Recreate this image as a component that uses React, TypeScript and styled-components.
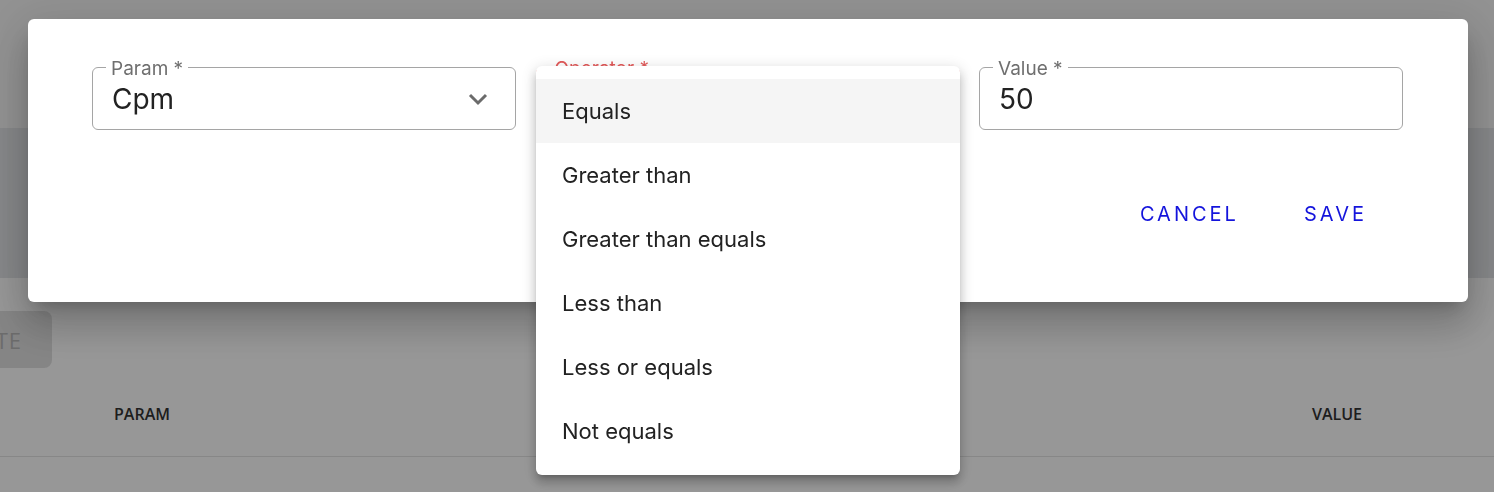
import styled, { createGlobalStyle } from "styled-components";

const GlobalStyle = createGlobalStyle`
  html, body {
    margin: 0;
    padding: 0;
    overflow: hidden;
    background: #fcfcfc;
    font-family: Inter, "Open Sans", sans-serif;
  }
`;

const Page = styled.div`
  width: 1494px;
  height: 492px;
  display: flex;
  flex-direction: column;
  background: #fcfcfc;
`;

const TopBand = styled.div`
  height: 128px;
  background: #f4f4f4;
`;

const FilterBand = styled.div`
  height: 150px;
  background: #e0e2e5;
`;

const ButtonRow = styled.div`
  width: 52px;
  margin-top: 33px;
  display: flex;
  justify-content: flex-end;
`;

const CreateButton = styled.button`
  flex-shrink: 0;
  height: 57px;
  padding: 0 30px;
  border: none;
  border-radius: 8px;
  background: #dedede;
  color: #b4b4b4;
  font-family: "Open Sans", sans-serif;
  font-size: 22px;
  letter-spacing: 1px;
`;

const TableHead = styled.div`
  margin-top: 8px;
  height: 81px;
  display: grid;
  grid-template-columns: 1fr 1fr auto;
  align-items: center;
  padding: 0 132px 4px 114px;
  box-sizing: border-box;
  border-bottom: 1px solid #e2e2e2;
`;

const HeadCell = styled.div`
  font-family: "Open Sans", sans-serif;
  font-weight: 600;
  font-size: 16px;
  color: #333;
`;

const Backdrop = styled.div`
  position: fixed;
  inset: 0;
  background: rgba(0, 0, 0, 0.4);
  padding: 19px 0 0 28px;
`;

const Dialog = styled.div`
  width: 1440px;
  box-sizing: border-box;
  padding: 48px 64px 64px;
  background: #fff;
  border-radius: 6px;
  box-shadow: 0 11px 15px -7px rgba(0, 0, 0, 0.2),
    0 24px 38px 3px rgba(0, 0, 0, 0.14), 0 9px 46px 8px rgba(0, 0, 0, 0.12);
`;

const FieldsRow = styled.div`
  display: grid;
  grid-template-columns: repeat(3, 424px);
  column-gap: 19.5px;
`;

const Field = styled.div<{ $error?: boolean }>`
  position: relative;
  height: 63px;
  box-sizing: border-box;
  border: 1px solid ${(p) => (p.$error ? "#e35b5b" : "#a5a5a5")};
  border-radius: 6px;
  display: flex;
  align-items: center;
  padding: 0 26px 0 19px;
`;

const Label = styled.span<{ $error?: boolean }>`
  position: absolute;
  left: 13px;
  top: -10px;
  padding: 0 5px;
  background: #fff;
  font-size: 19px;
  line-height: 22px;
  color: ${(p) => (p.$error ? "#e35b5b" : "#6f6f6f")};
`;

const FieldValue = styled.span`
  flex: 1;
  font-size: 28px;
  color: #222;
`;

const Actions = styled.div`
  display: flex;
  justify-content: flex-end;
  gap: 36px;
  margin-top: 60px;
  padding-right: 24px;
`;

const TextButton = styled.button`
  height: 48px;
  padding: 0 13px 0 16px;
  border: none;
  background: none;
  color: #1414dc;
  font-family: Inter, sans-serif;
  font-size: 20px;
  letter-spacing: 3px;
  text-transform: uppercase;
`;

const Menu = styled.ul`
  position: fixed;
  left: 536px;
  top: 66px;
  width: 424px;
  margin: 0;
  padding: 13px 0 12px;
  list-style: none;
  background: #fff;
  border-radius: 6px;
  box-shadow: 0 5px 5px -3px rgba(0, 0, 0, 0.2),
    0 8px 10px 1px rgba(0, 0, 0, 0.14), 0 3px 14px 2px rgba(0, 0, 0, 0.12);
`;

const MenuItem = styled.li<{ $active?: boolean }>`
  height: 64px;
  display: flex;
  align-items: center;
  padding-left: 26px;
  font-size: 22px;
  color: #222;
  background: ${(p) => (p.$active ? "#f5f5f5" : "transparent")};
`;

const Chevron = () => (
  <svg width="22" height="14" viewBox="0 0 22 14">
    <polyline
      points="3,3 11,11 19,3"
      fill="none"
      stroke="#6b6b6b"
      strokeWidth="3"
    />
  </svg>
);

const operators = [
  "Equals",
  "Greater than",
  "Greater than equals",
  "Less than",
  "Less or equals",
  "Not equals",
];

const App = () => {
  return (
    <>
      <GlobalStyle />
      <Page>
        <TopBand />
        <FilterBand />
        <ButtonRow>
          <CreateButton>CREATE</CreateButton>
        </ButtonRow>
        <TableHead>
          <HeadCell>PARAM</HeadCell>
          <HeadCell>OPERATOR</HeadCell>
          <HeadCell>VALUE</HeadCell>
        </TableHead>
      </Page>
      <Backdrop>
        <Dialog>
          <FieldsRow>
            <Field>
              <Label>Param *</Label>
              <FieldValue>Cpm</FieldValue>
              <Chevron />
            </Field>
            <Field $error>
              <Label $error>Operator *</Label>
              <FieldValue />
            </Field>
            <Field>
              <Label>Value *</Label>
              <FieldValue>50</FieldValue>
            </Field>
          </FieldsRow>
          <Actions>
            <TextButton>Cancel</TextButton>
            <TextButton>Save</TextButton>
          </Actions>
        </Dialog>
      </Backdrop>
      <Menu>
        {operators.map((op, i) => (
          <MenuItem key={op} $active={i === 0}>
            {op}
          </MenuItem>
        ))}
      </Menu>
    </>
  );
};

export default App;
